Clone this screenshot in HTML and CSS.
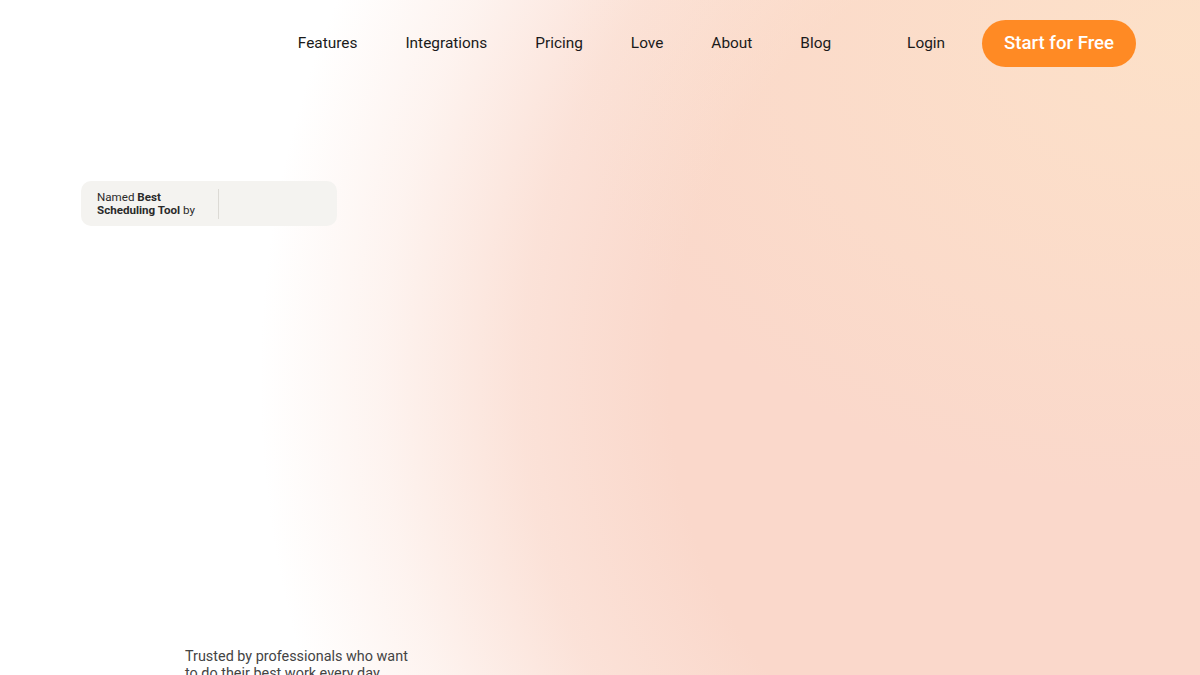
FILE: index.html
```html
<!DOCTYPE html>
<html lang="en">
<head>
  <meta charset="UTF-8">
  <meta name="viewport" content="width=device-width, initial-scale=1.0">
  <title>Start for Free</title>
  <link rel="stylesheet" href="styles.css">
</head>
<body>
  <div id="page">
    <header id="topbar">
      <div class="logo"></div>
      <nav class="menu">
        <a href="#">Features</a>
        <a href="#">Integrations</a>
        <a href="#">Pricing</a>
        <a href="#">Love</a>
        <a href="#">About</a>
        <a href="#">Blog</a>
      </nav>
      <div class="actions">
        <a href="#" class="login">Login</a>
        <a href="#" class="button-start">Start for Free</a>
      </div>
    </header>

    <section id="hero">
      <div class="award">
        <div class="award-text">Named <b>Best</b><br><b>Scheduling Tool</b> by</div>
        <div class="award-logo"></div>
      </div>
    </section>

    <div id="trusted">
      <p>Trusted by professionals who want to do their best work every day.</p>
    </div>
  </div>
</body>
</html>
```

FILE: styles.css
```css
/* Fullscreen */
body, html {
  height: 100%;
  margin: 0;
  overflow: hidden;
}

body {
  font-family: Roboto, "Liberation Sans", sans-serif;
  color: #1a1a1a;
  background-color: #ffffff;
  background-image:
    radial-gradient(ellipse 620px 460px at 1180px 40px, rgba(253, 226, 200, 0.85), rgba(253, 226, 200, 0) 100%),
    radial-gradient(ellipse 820px 900px at 1080px 380px, #fad8cb 0%, #fad8cb 50%, rgba(250, 216, 203, 0.75) 68%, rgba(250, 216, 203, 0.3) 85%, rgba(250, 216, 203, 0) 100%);
}

a {
  color: inherit;
  text-decoration: none;
}

#page {
  height: 100%;
  display: flex;
  flex-direction: column;
}

#topbar {
  display: flex;
  align-items: center;
  padding: 20px 64px 0 81px;
  height: 47px;
}

.logo {
  width: 160px;
}

.menu {
  display: flex;
  gap: 48px;
  margin-left: auto;
  font-size: 15.4px;
  padding-bottom: 1px;
}

.actions {
  display: flex;
  align-items: center;
  gap: 37px;
  margin-left: 76px;
  font-size: 15.4px;
}

.login {
  padding-bottom: 1px;
}

.button-start {
  display: flex;
  align-items: center;
  height: 47px;
  padding: 0 22px 1px;
  box-sizing: border-box;
  border-radius: 24px;
  background: #ff8a24;
  color: #fff;
  font-size: 18.6px;
  font-weight: 500;
}

#hero {
  padding: 114px 0 0 81px;
}

.award {
  display: flex;
  align-items: center;
  width: 256px;
  height: 45px;
  box-sizing: border-box;
  padding: 0 16px;
  border-radius: 10px;
  background: #f4f3f0;
}

.award-text {
  width: 107px;
  font-size: 11.6px;
  line-height: 13px;
  color: #2a2a2a;
  padding: 2px 14px 2px 0;
  border-right: 1px solid #dcdad5;
}

.award-text b {
  font-weight: 700;
}

#trusted {
  margin-top: auto;
  padding-left: 185px;
}

#trusted p {
  margin: 0;
  width: 236px;
  font-size: 14.4px;
  line-height: 17px;
  color: #444;
  transform: translateY(7px);
}
```
